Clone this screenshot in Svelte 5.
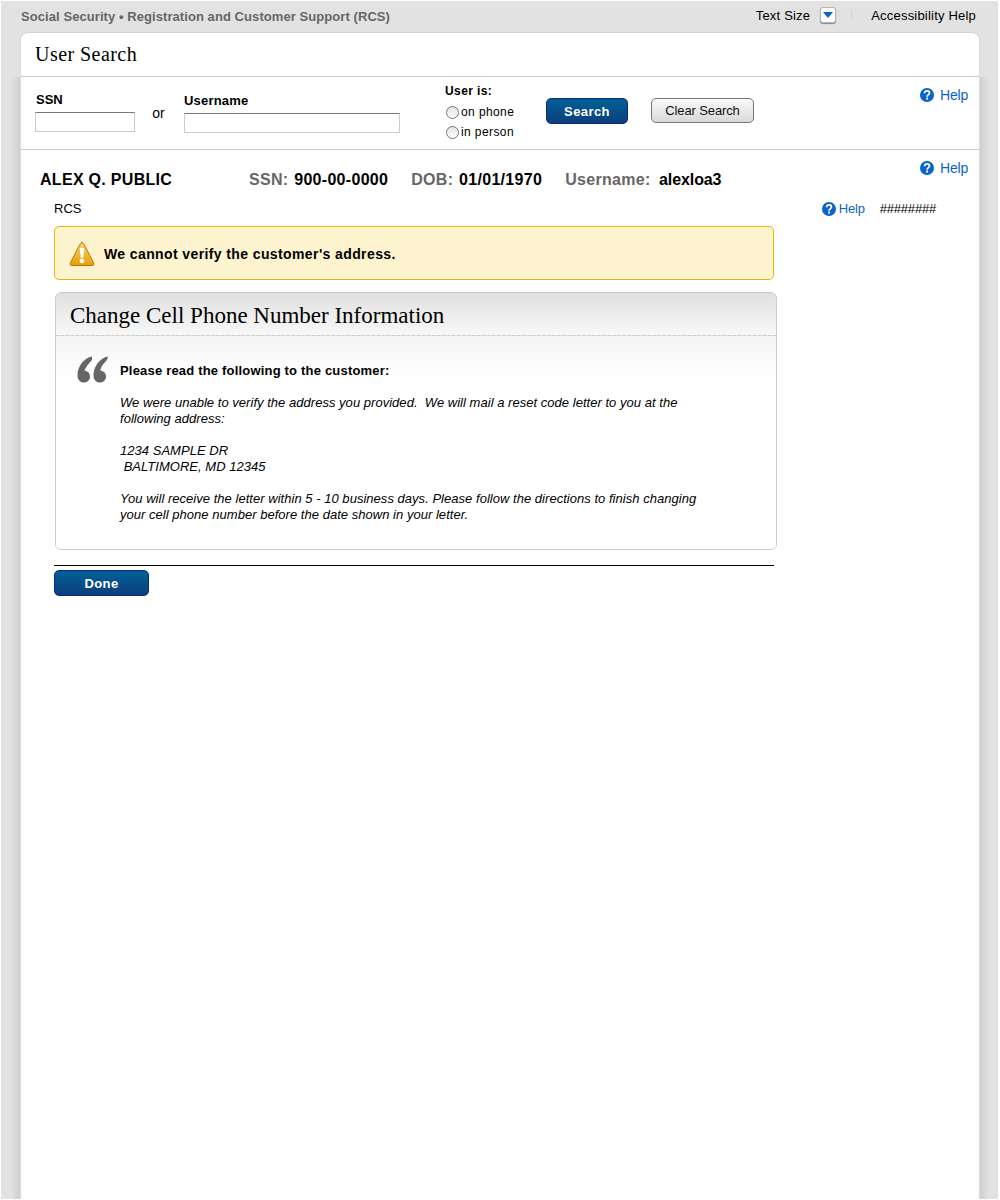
<script>
  const helpPath = "M5.300 6.100c0-1.700 1.200-2.700 2.800-2.700s2.700 1 2.700 2.300c0 1.200-.8 1.700-1.500 2.200-.8.500-1.200 1-1.200 2";
</script>

{#snippet helpIcon()}
  <svg class="help-icon" width="14" height="14" viewBox="0 0 16 16">
    <circle cx="8" cy="8" r="8" fill="#0a63c9" />
    <path d={helpPath} fill="none" stroke="#fff" stroke-width="2" />
    <rect x="7" y="11" width="2.200" height="2.200" fill="#fff" />
  </svg>
{/snippet}

<div class="page">
  <header class="topbar">
    <div class="brand">Social Security • Registration and Customer Support (RCS)</div>
    <div class="tools">
      <span>Text Size</span>
      <span class="size-btn"><i></i></span>
      <span class="sep"></span>
      <span>Accessibility Help</span>
    </div>
  </header>

  <div class="card-wrap">
    <main class="card">
      <h1 class="card-title">User Search</h1>

      <section class="search">
        <label class="field ssn">
          <span>SSN</span>
          <input type="text" />
        </label>
        <span class="or">or</span>
        <label class="field username">
          <span>Username</span>
          <input type="text" />
        </label>
        <div class="user-is">
          <b>User is:</b>
          <label><span class="radio"></span>on phone</label>
          <label><span class="radio"></span>in person</label>
        </div>
        <button class="btn primary search-btn">Search</button>
        <button class="btn clear">Clear Search</button>
        <a class="help search-help">{@render helpIcon()}<span>Help</span></a>
      </section>

      <section class="customer">
        <div class="person">
          <strong class="name">ALEX Q. PUBLIC</strong>
          <span class="pair ssn-pair"><em>SSN:</em> 900-00-0000</span>
          <span class="pair dob-pair"><em>DOB:</em> 01/01/1970</span>
          <span class="pair last"><em>Username:</em>&nbsp; <span class="login">alexloa3</span></span>
        </div>
        <a class="help person-help">{@render helpIcon()}<span>Help</span></a>
      </section>

      <div class="crumbs">
        <span>RCS</span>
        <div class="crumb-right">
          <a class="help small">{@render helpIcon()}<span>Help</span></a>
          <span class="hashes">########</span>
        </div>
      </div>

      <div class="content">
        <div class="alert">
          <svg width="26" height="26" viewBox="0 0 26 26">
            <defs>
              <linearGradient id="warn" x1="0" y1="0" x2="0" y2="1">
                <stop offset="0" stop-color="#fbd56e" />
                <stop offset="1" stop-color="#eb9c06" />
              </linearGradient>
            </defs>
            <path d="M13 1.500c.8 0 1.300.4 1.700 1.200l10 19.300c.6 1.200-.1 2.500-1.500 2.500H2.800c-1.400 0-2.100-1.300-1.500-2.500l10-19.300c.4-.8.9-1.200 1.700-1.200z" fill="url(#warn)" stroke="#b87a08" stroke-width="1" />
            <path d="M10.800 7h4.400l-.9 10h-2.600z" fill="#fff" />
            <circle cx="13" cy="20" r="2.300" fill="#fff" />
          </svg>
          <strong>We cannot verify the customer's address.</strong>
        </div>

        <section class="panel">
          <h2>Change Cell Phone Number Information</h2>
          <div class="panel-body">
            <svg class="quote" width="32" height="27" viewBox="0 0 32 27">
              <path d="M15 .5C7 2 .5 10 .5 19.500c0 4.300 2.700 7 6.300 7s6.200-2.500 6.200-6c0-3.400-2.500-5.700-5.600-5.700C8.500 11.500 11.500 7.500 15 4z" fill="#666" />
              <path d="M31 .5C23 2 16.500 10 16.500 19.500c0 4.300 2.700 7 6.300 7s6.200-2.500 6.200-6c0-3.400-2.500-5.700-5.600-5.700.1-3.300 3.100-7.300 6.600-10.800z" fill="#666" />
            </svg>
            <div class="script">
              <strong>Please read the following to the customer:</strong>
              <p>We were unable to verify the address you provided.&nbsp; We will mail a reset code letter to you at the following address:</p>
              <p>1234 SAMPLE DR<br />&nbsp;BALTIMORE, MD 12345</p>
              <p>You will receive the letter within 5 - 10 business days. Please follow the directions to finish changing your cell phone number before the date shown in your letter.</p>
            </div>
          </div>
        </section>

        <div class="actions">
          <button class="btn primary done">Done</button>
        </div>
      </div>
    </main>
  </div>
</div>

<style>
  :global(body) {
    background: #fff;
  }

  .page {
    box-sizing: border-box;
    height: 1198px;
    margin: 1px 2px 1px 1px;
    background: #e2e2e2;
    font-family: "Liberation Sans", Arial, sans-serif;
    font-size: 13px;
    color: #000;
    overflow: hidden;
  }

  .topbar {
    display: flex;
    justify-content: space-between;
    height: 30px;
    padding: 0 22px 0 20px;
  }

  .brand {
    color: #666;
    font-weight: bold;
    line-height: 31px;
    letter-spacing: 0.07px;
  }

  .tools {
    display: flex;
    align-items: center;
    height: 28px;
    letter-spacing: 0.2px;
  }

  .size-btn {
    box-sizing: border-box;
    width: 16px;
    height: 16px;
    margin-left: 10px;
    border: 1px solid #b5b5b5;
    border-radius: 3px;
    background: #fff;
    box-shadow: 0 1px 1px #888;
    display: flex;
    justify-content: center;
    padding-top: 4px;
  }

  .size-btn i {
    width: 0;
    height: 0;
    border: 5px solid transparent;
    border-top: 6px solid #0a63c9;
    border-bottom: 0;
  }

  .sep {
    width: 1px;
    height: 10px;
    background: #d4d4d4;
    margin: 0 19px 0 15px;
  }

  .card-wrap {
    margin: 1px 0 0;
    padding: 0 18px 0 19px;
    background: linear-gradient(#e2e2e2, #e2e2e2) top / 100% 45px no-repeat,
      linear-gradient(90deg, #e2e2e2 11px, #e0e0e0 11px, #cfcfcf 19px, #cfcfcf calc(100% - 18px), #e0e0e0 calc(100% - 10px), #e2e2e2 calc(100% - 10px));
  }

  .card {
    height: 1167px;
    background: #fff;
    border-radius: 8px 8px 0 0;
    box-shadow: inset 0 1px 0 #d2d2d2, inset 1px 0 0 #ddd, inset -1px 0 0 #ddd;
  }

  .card-title {
    box-sizing: border-box;
    height: 45px;
    margin: 0;
    padding: 11px 15px 0;
    font: normal 20px/22px "Liberation Serif", Georgia, serif;
    letter-spacing: 0.45px;
    border-bottom: 1px solid #ccc;
  }

  .search {
    box-sizing: border-box;
    height: 73px;
    display: flex;
    padding: 0 12px 0 15px;
    border-bottom: 1px solid #ccc;
    position: relative;
  }

  .field {
    display: flex;
    flex-direction: column;
    font-weight: bold;
  }

  .field span {
    line-height: 14px;
  }

  .field input {
    box-sizing: border-box;
    height: 20px;
    padding: 0;
    border: 1px solid #ccc;
    border-top: 1px solid #777;
    background: #fff;
    border-radius: 0;
  }

  .ssn {
    width: 100px;
    padding: 16px 0 0 0;
  }

  .ssn span {
    padding-left: 1px;
    margin-bottom: 5px;
  }

  .ssn input {
    width: 100px;
  }

  .or {
    width: 47px;
    padding-top: 28px;
    padding-right: 2px;
    text-align: center;
    font-size: 14px;
    line-height: 16px;
  }

  .username {
    width: 216px;
    padding: 17px 0 0;
  }

  .username span {
    margin-bottom: 5px;
    letter-spacing: 0.2px;
  }

  .username input {
    width: 216px;
    height: 20px;
  }

  .user-is {
    width: 101px;
    margin-left: 45px;
    padding-top: 7px;
    display: flex;
    flex-direction: column;
    font-size: 12px;
    letter-spacing: 0.4px;
  }

  .user-is b {
    line-height: 15px;
    margin-bottom: 3px;
  }

  .user-is label {
    display: flex;
    align-items: center;
    height: 20px;
  }

  .radio {
    box-sizing: border-box;
    width: 13px;
    height: 13px;
    margin: 0 2px 0 1px;
    border: 1px solid #777;
    border-radius: 50%;
    background: linear-gradient(#e4e4e4, #fff);
  }

  .btn {
    font-family: inherit;
    cursor: pointer;
    padding: 0;
  }

  .primary {
    border: 1px solid #0c2a78;
    border-radius: 5px;
    background: linear-gradient(#006096, #0d3f7c);
    color: #fff;
    font-size: 13px;
    font-weight: bold;
    letter-spacing: 0.4px;
  }

  .search-btn {
    width: 82px;
    height: 26px;
    margin-top: 21px;
  }

  .clear {
    width: 103px;
    height: 25px;
    margin: 21px 0 0 23px;
    border: 1px solid #777;
    border-radius: 5px;
    background: linear-gradient(#fafafa, #d8d8d8);
    color: #111;
    font-size: 13px;
    letter-spacing: -0.13px;
  }

  .help {
    display: inline-flex;
    align-items: center;
    gap: 6px;
    color: #0a63c9;
    font-size: 14px;
    line-height: 16px;
    letter-spacing: -0.2px;
  }

  .help-icon {
    flex: none;
  }

  .search-help {
    margin-left: auto;
    margin-top: 10px;
    align-self: flex-start;
  }

  .customer {
    display: flex;
    justify-content: space-between;
    padding: 10px 12px 0 20px;
    height: 33px;
    box-sizing: border-box;
  }

  .person {
    display: flex;
    font-size: 16px;
    font-weight: bold;
    padding-top: 10px;
    line-height: 19px;
    letter-spacing: 0.3px;
  }

  .name {
    width: 209px;
  }

  .pair {
    margin-right: 23px;
    word-spacing: 1px;
  }

  .pair em {
    font-style: normal;
    color: #666;
  }

  .last {
    word-spacing: 0;
  }

  .login {
    margin-left: -1px;
    letter-spacing: -0.1px;
  }

  .person-help {
    align-self: flex-start;
  }

  .crumbs {
    display: flex;
    justify-content: space-between;
    height: 17px;
    margin-top: 17px;
    padding: 0 44px 0 34px;
    line-height: 18px;
  }

  .crumb-right {
    display: flex;
    align-items: center;
    gap: 15px;
  }

  .small {
    font-size: 13px;
    gap: 3px;
  }

  .hashes {
    letter-spacing: -0.2px;
  }

  .content {
    width: 723px;
    margin: 9px 0 0 34px;
  }

  .alert {
    box-sizing: border-box;
    width: 720px;
    height: 54px;
    display: flex;
    align-items: center;
    gap: 9px;
    padding: 1px 0 0 14px;
    border: 1px solid #eab308;
    border-radius: 5px;
    background: #fdf3cf;
    font-size: 14px;
    letter-spacing: 0.39px;
  }

  .panel {
    box-sizing: border-box;
    height: 258px;
    margin: 12px 0 0 1px;
    border: 1px solid #ccc;
    border-radius: 6px;
    overflow: hidden;
  }

  .panel h2 {
    box-sizing: border-box;
    height: 43px;
    margin: 0;
    padding: 10px 14px 0;
    font: normal 23px/26px "Liberation Serif", Georgia, serif;
    background: linear-gradient(#e0e0e0, #f8f8f8);
    border-bottom: 1px dashed #ccc;
  }

  .panel-body {
    display: flex;
    padding-top: 20px;
    background: linear-gradient(#f4f4f4, #fff 42px);
    height: 214px;
    box-sizing: border-box;
  }

  .quote {
    flex: none;
    margin-left: 21px;
  }

  .script {
    width: 585px;
    margin: -2px 0 0 11px;
    font-size: 13px;
    line-height: 16px;
    font-style: italic;
    letter-spacing: 0.03px;
  }

  .script strong {
    display: block;
    font-style: normal;
    margin-top: 9px;
    margin-bottom: 16px;
    letter-spacing: 0.19px;
  }

  .script p {
    margin: 0 0 16px;
  }

  .actions {
    margin-top: 15px;
    width: 720px;
    border-top: 1px solid #000;
    padding-top: 4px;
  }

  .done {
    width: 95px;
    height: 26px;
    display: block;
  }
</style>
